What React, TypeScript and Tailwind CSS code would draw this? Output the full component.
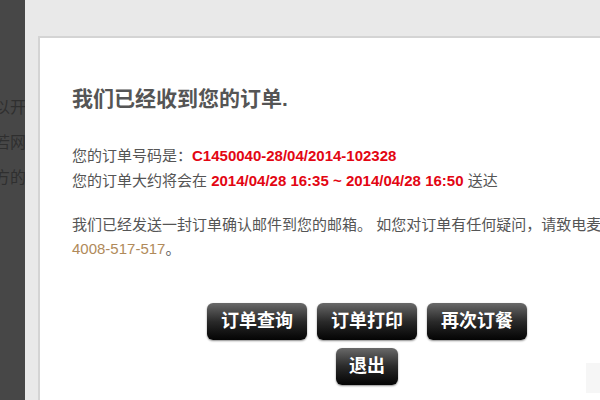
const cjk = '"Liberation Sans", "Noto Sans CJK SC", sans-serif';

function DarkButton({ label, wide = true }: { label: string; wide?: boolean }) {
  return (
    <button
      className={`${wide ? 'w-[100px]' : 'w-[62px]'} h-[37px] rounded-[6px] bg-gradient-to-b from-[#6a6a6a] via-[#2a2a2a] to-[#050505] text-[18px] font-bold text-white shadow-[0_1px_2px_rgba(0,0,0,0.45)]`}
      style={{ fontFamily: cjk }}
    >
      {label}
    </button>
  );
}

export default function App() {
  // page text behind the overlay, clipped by the strip
  const sideRows = ['以开始', '若网站', '方的'];

  return (
    <div className="relative flex h-[400px] w-[600px] overflow-hidden" style={{ fontFamily: cjk }}>
      <div className="w-[25px] shrink-0 overflow-hidden bg-[#474747] pt-[97px]">
        {sideRows.map((row) => (
          <div key={row} className="ml-[-6px] h-[35px] whitespace-nowrap text-[16px] leading-[22px] text-[#2f2f2f]">
            {row}
          </div>
        ))}
      </div>

      <div className="flex-1 bg-[#e9e9e9] pl-[13px] pt-[36px]">
        <div className="h-[400px] w-[656px] border-l-2 border-t-2 border-[#d4d4d4] bg-white px-[32px] pt-[46px] text-[#555555]">
          <h1 className="text-[21px] font-bold leading-[29px] text-[#555555]">我们已经收到您的订单.</h1>

          <div className="mt-[30px] whitespace-nowrap text-[15px] leading-[25px]">
            <p>
              您的订单号码是：<span className="font-bold text-[#e30613]">C1450040-28/04/2014-102328</span>
            </p>
            <p>
              您的订单大约将会在{' '}
              <span className="font-bold text-[#e30613]">2014/04/28 16:35 ~ 2014/04/28 16:50</span> 送达
            </p>
          </div>

          <p className="mt-[20px] whitespace-nowrap text-[15px] leading-[24px]">
            我们已经发送一封订单确认邮件到您的邮箱。 如您对订单有任何疑问，请致电麦当劳订餐专线
            <br />
            <span className="text-[#b08a5a]">4008-517-517</span>。
          </p>

          <div className="mt-[42px] flex flex-col items-center gap-[8px]">
            <div className="flex gap-[10px]">
              <DarkButton label="订单查询" />
              <DarkButton label="订单打印" />
              <DarkButton label="再次订餐" />
            </div>
            <DarkButton label="退出" wide={false} />
          </div>
        </div>
      </div>

      <div className="absolute right-0 top-[363px] h-[30px] w-[14px] bg-[#f6f6f6]" />
    </div>
  );
}
